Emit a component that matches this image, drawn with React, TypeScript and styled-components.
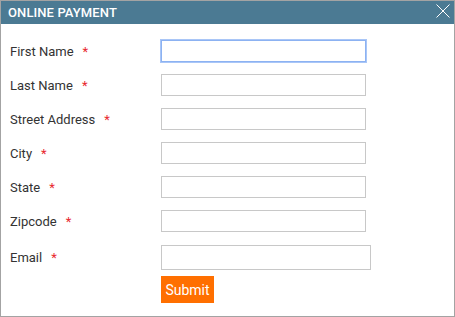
import styled, { createGlobalStyle } from "styled-components";

const GlobalStyle = createGlobalStyle`
    html, body {
        margin: 0;
        padding: 0;
        background: #fff;
    }
    body {
        font-family: Roboto, "Liberation Sans", Arial, sans-serif;
    }
`

const Dialog = styled.div`
    width: 455px;
    height: 317px;
    box-sizing: border-box;
    border: 1px solid #a3a3a3;
    background: #fff;
    display: flex;
    flex-direction: column;
`
const Header = styled.div`
    height: 23px;
    background: #4b7a93;
    display: flex;
    align-items: center;
    justify-content: space-between;
    padding: 0 3px 0 7px;
`
const Title = styled.span`
    color: #fff;
    font-size: 13px;
    font-weight: 500;
    letter-spacing: 0.1px;
`
const CloseButton = styled.button`
    width: 16px;
    height: 16px;
    padding: 0;
    border: none;
    background: none;
    display: flex;
    align-items: center;
    justify-content: center;
    cursor: pointer;
    margin-top: -3px;
`
const Form = styled.form`
    padding: 10px 0 0 9px;
    display: flex;
    flex-direction: column;
`
const Row = styled.div<{ $tall?: boolean }>`
    height: ${({ $tall }) => ($tall ? "38px" : "34px")};
    display: flex;
    align-items: center;
`
const Label = styled.label`
    width: 151px;
    font-size: 13px;
    color: #333;
`
const Required = styled.span`
    color: #e8282e;
    margin-left: 9px;
`
const Input = styled.input<{ $wide?: boolean }>`
    box-sizing: border-box;
    width: ${({ $wide }) => ($wide ? "210px" : "205px")};
    height: ${({ $wide }) => ($wide ? "25px" : "22px")};
    border: 1px solid #c8c8c8;
    padding: 0 4px;
    margin: 0;
    font-family: inherit;
    font-size: 13px;
    outline: none;

    &:focus, &[data-focus="true"] {
        border-color: #8cb2f2;
        box-shadow: 0 0 0 1px #a9c6f7;
    }
`
const ButtonRow = styled.div`
    padding-left: 151px;
`
const SubmitButton = styled.button`
    width: 53px;
    height: 27px;
    border: none;
    background: #ff6f00;
    color: #fff;
    font-family: inherit;
    font-size: 14px;
    padding: 0;
    cursor: pointer;
`

const fields = [
    { id: "first", label: "First Name", focus: true },
    { id: "last", label: "Last Name" },
    { id: "street", label: "Street Address" },
    { id: "city", label: "City" },
    { id: "state", label: "State" },
    { id: "zip", label: "Zipcode" },
]

export default function App(){
    return(
        <>
            <GlobalStyle/>
            <Dialog>
                <Header>
                    <Title>ONLINE PAYMENT</Title>
                    <CloseButton type="button" aria-label="Close">
                        <svg width="14" height="14" viewBox="0 0 14 14">
                            <path d="M0.5 0.5 L13.5 13.5 M13.5 0.5 L0.5 13.5" stroke="#fff" strokeWidth="1" fill="none"/>
                        </svg>
                    </CloseButton>
                </Header>

                <Form onSubmit={(e) => e.preventDefault()}>
                    {fields.map((f) => (
                        <Row key={f.id}>
                            <Label htmlFor={f.id}>{f.label}<Required>*</Required></Label>
                            <Input id={f.id} type="text" data-focus={f.focus ? "true" : undefined}/>
                        </Row>
                    ))}
                    <Row $tall>
                        <Label htmlFor="email">Email<Required>*</Required></Label>
                        <Input id="email" type="email" $wide/>
                    </Row>
                    <ButtonRow>
                        <SubmitButton type="submit">Submit</SubmitButton>
                    </ButtonRow>
                </Form>
            </Dialog>
        </>
    )
}
